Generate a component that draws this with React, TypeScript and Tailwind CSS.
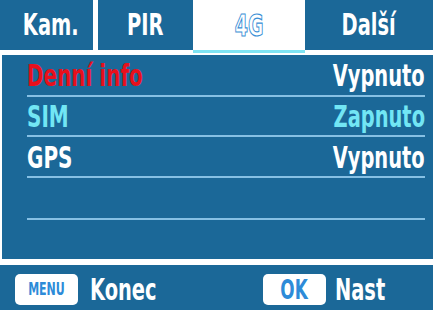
import React from 'react'

const FONT = "font-['DejaVu_Sans_Condensed','Liberation_Sans_Narrow',Roboto,sans-serif] font-bold"

// the reference uses a tall condensed face; squeeze the condensed sans a bit more
function N({ children, origin = 'origin-center', k = 'scale-x-[0.72]' }: { children: React.ReactNode; origin?: string; k?: string }) {
  return <span className={`inline-block ${k} ${origin}`}>{children}</span>
}

type Row = { label: string; value: string; labelColor: string; valueColor: string; h: string }

const ROWS: Row[] = [
  { label: 'Denní info', value: 'Vypnuto', labelColor: 'text-[#e8101c]', valueColor: 'text-white', h: 'h-[42px]' },
  { label: 'SIM', value: 'Zapnuto', labelColor: 'text-[#72e6f4]', valueColor: 'text-[#72e6f4]', h: 'h-[40px]' },
  { label: 'GPS', value: 'Vypnuto', labelColor: 'text-white', valueColor: 'text-white', h: 'h-[41px]' },
  { label: '', value: '', labelColor: 'text-white', valueColor: 'text-white', h: 'h-[42px]' },
]

const TAB = 'h-[50px] bg-[#1b6898] text-white text-[30px] leading-none flex items-center justify-center'

export default function App() {
  return (
    <div className={`w-[433px] h-[310px] bg-white overflow-hidden flex flex-col ${FONT}`}>
      {/* Tabs */}
      <div className="flex items-start h-[53px]">
        <div className={`w-[93px] pl-[9px] ${TAB}`}><N>Kam.</N></div>
        <div className="w-[5px]" />
        <div className={`w-[95px] ${TAB}`}><N>PIR</N></div>
        <div className="w-[112px] h-[53px] border-b-[3px] border-[#7fe3f2] bg-white text-white text-[31px] leading-none flex items-center justify-center [-webkit-text-stroke:1.2px_#3a8fd6]">
          <N k="scale-x-[0.68]">4G</N>
        </div>
        <div className={`flex-1 ${TAB}`}><N>Další</N></div>
      </div>

      {/* Panel */}
      <div className="mt-[2px] ml-[2px] h-[204px] bg-[#1b6898] pl-[25px] pr-[8px] flex flex-col">
        {ROWS.map((r, i) => (
          <div
            key={i}
            className={`${r.h} border-b-2 border-[#86c0e4] flex items-center justify-between text-[30px] leading-none pt-[2px]`}
          >
            <span className={r.labelColor}><N origin="origin-left" k="scale-x-[0.74]">{r.label}</N></span>
            <span className={r.valueColor}><N origin="origin-right">{r.value}</N></span>
          </div>
        ))}
      </div>

      {/* Footer */}
      <div className="mt-[6px] flex-1 bg-[#1b6898] flex items-center pt-[4px] text-white text-[30px] leading-none">
        <div className="ml-[15px] w-[63px] h-[31px] rounded-[5px] bg-white text-[#2d8bd8] text-[17px] flex items-center justify-center">
          <N>MENU</N>
        </div>
        <div className="ml-[12px] w-[160px]"><N origin="origin-left">Konec</N></div>
        <div className="ml-[13px] w-[63px] h-[31px] rounded-[5px] bg-white text-[#2d8bd8] text-[26px] flex items-center justify-center">
          <N>OK</N>
        </div>
        <div className="ml-[9px]"><N origin="origin-left">Nast</N></div>
      </div>
    </div>
  )
}
